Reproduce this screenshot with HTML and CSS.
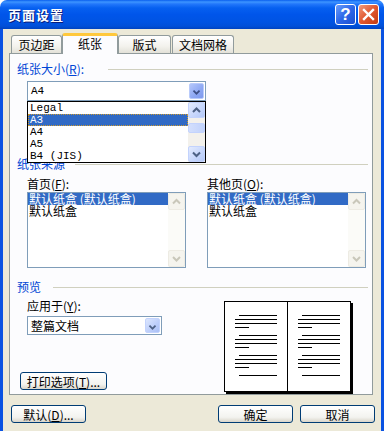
FILE: index.html
```html
<!DOCTYPE html>
<html lang="zh-CN">
<head>
    <meta charset="UTF-8">
    <title>页面设置</title>
    <link rel="stylesheet" href="styles.css">
</head>
<body>
    <div class="window">
        <div class="titlebar">
            <span class="title">页面设置</span>
            <span class="cap-btn help">?</span>
            <span class="cap-btn close">
                <svg width="19" height="19" viewBox="0 0 19 19"><path d="M5 5 L14 14 M14 5 L5 14" stroke="#fff" stroke-width="2.4" stroke-linecap="square"/></svg>
            </span>
        </div>
        <div class="frame">
            <div class="tabs">
                <span class="tab tab-margin">页边距</span>
                <span class="tab tab-paper active">纸张</span>
                <span class="tab tab-layout">版式</span>
                <span class="tab tab-grid">文档网格</span>
            </div>
            <div class="pane">
                <div class="group-head gh-size">
                    <span class="group-label">纸张大小(<u>R</u>):</span>
                    <span class="rule"></span>
                </div>
                <div class="combo combo-size">
                    <span class="combo-text mono">A4</span>
                    <span class="drop-btn hot">
                        <svg width="15" height="16" viewBox="0 0 15 16"><polyline points="4,6.5 7.5,10 11,6.5" fill="none" stroke="#3D4F86" stroke-width="2"/></svg>
                    </span>
                    <div class="droplist">
                        <div class="dl-items mono">
                            <div class="dl-item">Legal</div>
                            <div class="dl-item sel">A3</div>
                            <div class="dl-item">A4</div>
                            <div class="dl-item">A5</div>
                            <div class="dl-item">B4 (JIS)</div>
                        </div>
                        <div class="vscroll">
                            <span class="sb-btn">
                                <svg width="15" height="14" viewBox="0 0 15 14"><polyline points="4,9 7.5,5.5 11,9" fill="none" stroke="#4D6185" stroke-width="2"/></svg>
                            </span>
                            <span class="sb-track"><span class="sb-thumb"></span></span>
                            <span class="sb-btn">
                                <svg width="15" height="14" viewBox="0 0 15 14"><polyline points="4,5.5 7.5,9 11,5.5" fill="none" stroke="#4D6185" stroke-width="2"/></svg>
                            </span>
                        </div>
                    </div>
                </div>

                <div class="group-head gh-source">
                    <span class="group-label">纸张来源</span>
                    <span class="rule"></span>
                </div>
                <div class="source-row">
                    <div class="source-col">
                        <div class="field-label">首页(<u>F</u>):</div>
                        <div class="listbox">
                            <div class="lb-items">
                                <div class="lb-item sel">默认纸盒 (默认纸盒)</div>
                                <div class="lb-item">默认纸盒</div>
                            </div>
                            <div class="vscroll off">
                                <span class="sb-btn">
                                    <svg width="15" height="15" viewBox="0 0 15 15"><polyline points="4,9.5 7.5,6 11,9.5" fill="none" stroke="#C9C7BA" stroke-width="2"/></svg>
                                </span>
                                <span class="sb-track"></span>
                                <span class="sb-btn">
                                    <svg width="15" height="15" viewBox="0 0 15 15"><polyline points="4,6 7.5,9.5 11,6" fill="none" stroke="#C9C7BA" stroke-width="2"/></svg>
                                </span>
                            </div>
                        </div>
                    </div>
                    <div class="source-col">
                        <div class="field-label">其他页(<u>O</u>):</div>
                        <div class="listbox">
                            <div class="lb-items">
                                <div class="lb-item sel">默认纸盒 (默认纸盒)</div>
                                <div class="lb-item">默认纸盒</div>
                            </div>
                            <div class="vscroll off">
                                <span class="sb-btn">
                                    <svg width="15" height="15" viewBox="0 0 15 15"><polyline points="4,9.5 7.5,6 11,9.5" fill="none" stroke="#C9C7BA" stroke-width="2"/></svg>
                                </span>
                                <span class="sb-track"></span>
                                <span class="sb-btn">
                                    <svg width="15" height="15" viewBox="0 0 15 15"><polyline points="4,6 7.5,9.5 11,6" fill="none" stroke="#C9C7BA" stroke-width="2"/></svg>
                                </span>
                            </div>
                        </div>
                    </div>
                </div>

                <div class="group-head gh-preview">
                    <span class="group-label">预览</span>
                    <span class="rule"></span>
                </div>
                <div class="preview-row">
                    <div class="apply">
                        <div class="field-label">应用于(<u>Y</u>):</div>
                        <div class="combo combo-apply">
                            <span class="combo-text">整篇文档</span>
                            <span class="drop-btn">
                                <svg width="15" height="16" viewBox="0 0 15 16"><polyline points="4,6.5 7.5,10 11,6.5" fill="none" stroke="#4D6185" stroke-width="2"/></svg>
                            </span>
                        </div>
                        <button class="btn btn-print" type="button">打印选项(<u>T</u>)...</button>
                    </div>
                    <!-- 预览图：两页对开 -->
                    <svg class="book" width="130" height="93" viewBox="0 0 130 93">
                        <rect x="2" y="2" width="127" height="91" fill="#000"/>
                        <rect x="0.5" y="0.5" width="126" height="90" fill="#fff" stroke="#000"/>
                        <path d="M63.5 1 V90" stroke="#000"/>
                        <g stroke="#000">
                            <path d="M15 14.5 H53 M11 18.5 H53 M11 22.5 H53 M11 26.5 H25"/>
                            <path d="M15 34.5 H53 M11 38.5 H53 M11 42.5 H53 M11 46.5 H25"/>
                            <path d="M15 54.5 H53 M11 58.5 H53 M11 62.5 H53 M11 66.5 H25"/>
                            <path d="M15 74.5 H53"/>
                            <path d="M78 14.5 H116 M74 18.5 H116 M74 22.5 H116 M74 26.5 H88"/>
                            <path d="M78 34.5 H116 M74 38.5 H116 M74 42.5 H116 M74 46.5 H88"/>
                            <path d="M78 54.5 H116 M74 58.5 H116 M74 62.5 H116 M74 66.5 H88"/>
                            <path d="M78 74.5 H116"/>
                        </g>
                    </svg>
                </div>
            </div>
            <div class="footer">
                <button class="btn" type="button">默认(<u>D</u>)...</button>
                <span class="spacer"></span>
                <button class="btn" type="button">确定</button>
                <button class="btn" type="button">取消</button>
            </div>
        </div>
    </div>
</body>
</html>
```

FILE: styles.css
```css
* {
    box-sizing: border-box;
}
body {
    margin: 0;
    background: #fff;
    font-family: "Noto Sans CJK SC", "Liberation Sans", sans-serif;
    font-size: 12px;
    color: #000;
    overflow: hidden;
}
.mono {
    font-family: "Liberation Mono", "Noto Sans CJK SC", monospace;
    font-size: 11px;
}

/* 窗口 */
.window {
    width: 384px;
    height: 431px;
}
.titlebar {
    height: 29px;
    display: flex;
    align-items: center;
    padding: 0 5px 0 8px;
    border-radius: 7px 7px 0 0;
    background: linear-gradient(to bottom, #0A5FEE 0, #3D95FF 2px, #2277FB 4px, #0660F0 8px, #0055EA 50%, #0054E3 75%, #0150D9 90%, #0043C0 100%);
}
.title {
    flex: 1;
    color: #fff;
    font-weight: bold;
    font-size: 13px;
    letter-spacing: 1px;
    text-shadow: 1px 1px #0A1D7A;
}
.cap-btn {
    width: 21px;
    height: 21px;
    margin-left: 2px;
    border: 1px solid #fff;
    border-radius: 3px;
    display: flex;
    align-items: center;
    justify-content: center;
    color: #fff;
}
.help {
    background: linear-gradient(135deg, #6A9CFB, #2D67E8 50%, #1C4FD0);
    font-family: "Liberation Sans", sans-serif;
    font-size: 17px;
    font-weight: bold;
}
.close {
    background: linear-gradient(135deg, #F29B7D, #E0572F 50%, #C23B12);
}
.frame {
    height: 402px;
    background: #ECE9D8;
    border-left: 3px solid #0A52E2;
    border-right: 3px solid #0A52E2;
    padding: 0 8px 0 6px;
}

/* 选项卡 */
.tabs {
    position: relative;
    z-index: 2;
    height: 24px;
    display: flex;
    align-items: flex-end;
    padding-left: 2px;
}
.tab {
    height: 18px;
    border: 1px solid #919B9C;
    border-bottom: none;
    border-radius: 3px 3px 0 0;
    background: linear-gradient(to bottom, #fff, #F3F2ED 60%, #E3E1D8);
    text-align: center;
    line-height: 17px;
}
.tab-margin { width: 51px; }
.tab-paper { width: 56px; }
.tab-layout { width: 53px; }
.tab-grid { width: 62px; margin-left: 1px; }
.tab.active {
    height: 21px;
    margin-bottom: -1px;
    background: #FCFCFE;
    border-top: 3px solid #FFC83C;
    box-shadow: inset 0 -1px 0 #FCFCFE;
    line-height: 16px;
}
.pane {
    position: relative;
    z-index: 1;
    width: 364px;
    height: 342px;
    border: 1px solid #919B9C;
    background: #FCFCFE;
    padding: 8px 4px 0 7px;
}

/* 分组标题 */
.group-head {
    display: flex;
    align-items: center;
    height: 14px;
    line-height: 14px;
}
.group-label {
    color: #0046D5;
    white-space: nowrap;
}
.gh-size .group-label { width: 91px; }
.gh-source .group-label { width: 58px; }
.gh-preview .group-label { width: 36px; }
.rule {
    flex: 1;
    height: 1px;
    background: #D0D0BF;
}
.gh-source {
    margin-top: 56px;
}
.gh-preview {
    margin-top: 12px;
}
.field-label {
    height: 14px;
    line-height: 14px;
    white-space: nowrap;
}

/* 下拉框 */
.combo {
    position: relative;
    height: 20px;
    border: 1px solid #7F9DB9;
    background: #fff;
    display: flex;
    align-items: center;
}
.combo-size {
    width: 179px;
    margin: 5px 0 0 10px;
    z-index: 3;
}
.combo-apply {
    width: 135px;
    height: 19px;
    margin-top: 3px;
}
.combo-text {
    flex: 1;
    padding-left: 3px;
    line-height: 16px;
}
.drop-btn {
    width: 15px;
    height: 16px;
    margin-right: 1px;
    border: 1px solid #C3D3FD;
    border-radius: 2px;
    background: linear-gradient(135deg, #DCE6FE, #BCCEFA 60%, #A9BFF6);
    display: flex;
}
.combo-apply .drop-btn {
    height: 15px;
}
.drop-btn.hot {
    border-color: #B9CBFB;
    background: linear-gradient(135deg, #B4C7FB, #8DA7F3 60%, #7D99EE);
}
.droplist {
    position: absolute;
    left: -1px;
    top: calc(100% + 1px);
    width: 179px;
    height: 62px;
    border: 1px solid #000;
    background: #fff;
    display: flex;
}
.dl-items {
    width: 160px;
}
.dl-item {
    height: 12px;
    line-height: 12px;
    padding-left: 2px;
    white-space: pre;
}
.dl-item.sel {
    background: #316AC5;
    color: #fff;
    outline: 1px dotted #CE9A2E;
    outline-offset: -1px;
}

/* 滚动条 */
.vscroll {
    width: 17px;
    display: flex;
    flex-direction: column;
    background: #F3F1EC;
}
.sb-btn {
    height: 16px;
    border: 1px solid #C3D3FD;
    border-radius: 2px;
    background: linear-gradient(135deg, #E3EBFE, #C6D6FC 60%, #B4C8F7);
    display: flex;
    justify-content: center;
}
.sb-track {
    flex: 1;
    padding-top: 5px;
}
.sb-thumb {
    display: block;
    height: 10px;
    border: 1px solid #C3D3FD;
    border-radius: 2px;
    background: linear-gradient(to right, #D3DFFD, #C1D2FB);
}
.vscroll.off {
    background: #FBFBF8;
}
.vscroll.off .sb-btn {
    height: 17px;
    border-color: #EDEBE3;
    background: #F5F4EE;
    align-items: center;
}

/* 纸张来源列表 */
.source-row {
    display: flex;
    gap: 21px;
    margin: 6px 0 0 10px;
}
.listbox {
    width: 159px;
    height: 76px;
    margin-top: 1px;
    border: 1px solid #7F9DB9;
    background: #fff;
    display: flex;
}
.lb-items {
    flex: 1;
}
.lb-item {
    height: 12px;
    line-height: 12px;
    padding-left: 1px;
    white-space: nowrap;
}
.lb-item.sel {
    background: #316AC5;
    color: #fff;
}

/* 预览 */
.preview-row {
    display: flex;
    margin: 5px 0 0 10px;
}
.apply {
    width: 197px;
}
.book {
    display: block;
    margin-top: 2px;
}

/* 按钮 */
.btn {
    height: 18px;
    width: 75px;
    padding: 0;
    border: 1px solid #003C74;
    border-radius: 3px;
    background: linear-gradient(to bottom, #fff, #F3F3EF 70%, #D9D5CA);
    font-family: "Noto Sans CJK SC", "Liberation Sans", sans-serif;
    font-size: 12px;
    line-height: 15px;
    color: #000;
    white-space: nowrap;
}
.btn-print {
    width: 87px;
    margin: 37px 0 0 -7px;
}
.footer {
    display: flex;
    gap: 7px;
    margin: 10px -2px 0 2px;
}
.spacer {
    flex: 1;
}
```
